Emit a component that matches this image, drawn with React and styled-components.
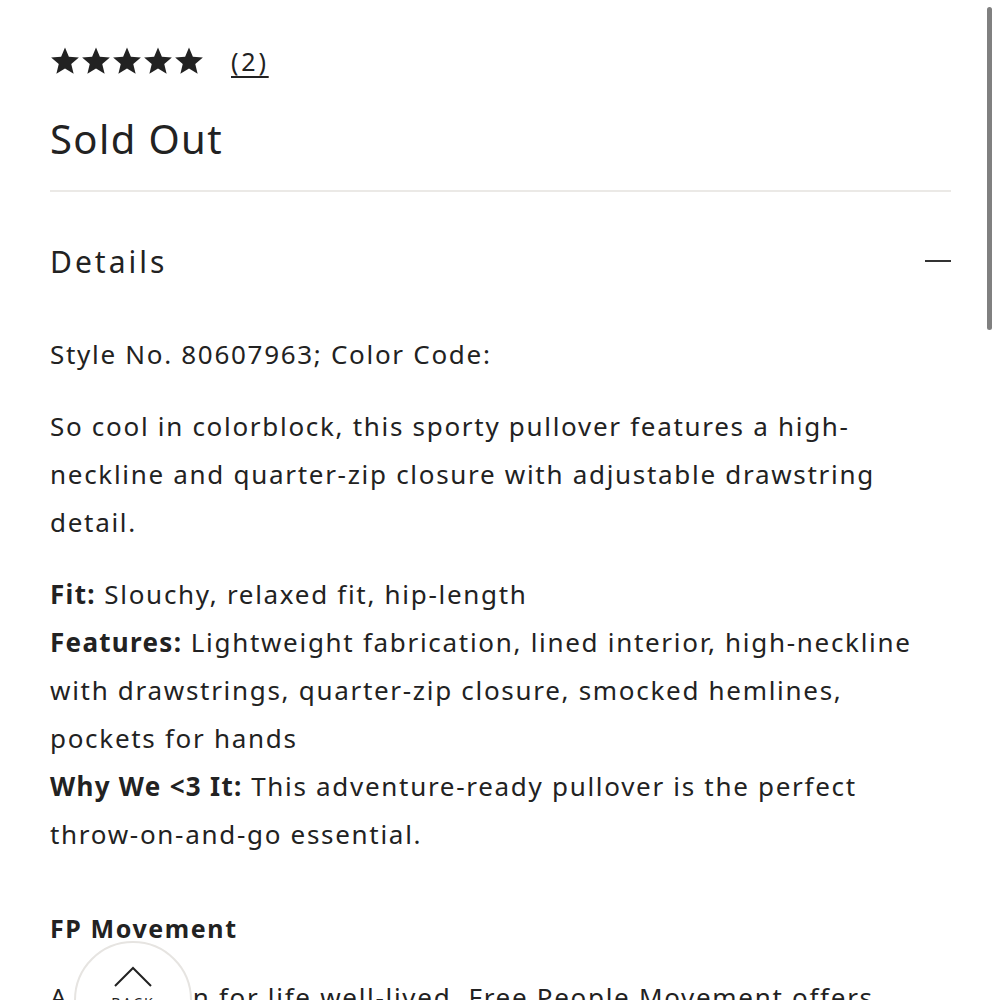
import React from "react";
import styled, { createGlobalStyle } from "styled-components";

const Global = createGlobalStyle`
  html, body { margin: 0; padding: 0; background: #fff; overflow: hidden; height: 1000px; }
  body { font-family: "Noto Sans", "Liberation Sans", sans-serif; color: #222; }
`;

const Page = styled.div`
  padding: 44px 49px 0 50px;
  width: 1000px;
  box-sizing: border-box;
`;

const RatingRow = styled.div`
  display: flex;
  align-items: center;
  gap: 27px;
  height: 34px;
`;

const Stars = styled.div`
  display: flex;
  gap: 1px;
`;

const Count = styled.a`
  font-size: 25px;
  color: #222;
  text-decoration: underline;
  text-underline-offset: 5px;
  letter-spacing: 2.8px;
`;

const Status = styled.h2`
  margin: 29px 0 0;
  font-weight: 400;
  font-size: 40px;
  letter-spacing: 1.4px;
  line-height: 64px;
  color: #222;
`;

const Divider = styled.hr`
  border: none;
  height: 2px;
  background: #ebe9e6;
  margin: 19px 0 0;
`;

const AccordionHeader = styled.div`
  display: flex;
  justify-content: space-between;
  align-items: center;
  height: 138px;
`;

const AccordionTitle = styled.h3`
  margin: 0;
  font-weight: 400;
  font-size: 30px;
  letter-spacing: 3px;
  color: #222;
`;

const Minus = styled.span`
  display: block;
  width: 26px;
  height: 2px;
  background: #333;
`;

const Body = styled.div`
  font-size: 26px;
  line-height: 48px;
  letter-spacing: 1.7px;
  color: #222;
`;

const Para = styled.p`
  margin: 0 0 24px;
`;

const Strong = styled.b`
  font-weight: 700;
  letter-spacing: 1.3px;
`;

const SubHeading = styled.h4`
  margin: 46px 0 21px;
  font-size: 25px;
  font-weight: 700;
  letter-spacing: 1.6px;
  line-height: 48px;
`;

const Scrollbar = styled.div`
  position: fixed;
  top: 7px;
  right: 8px;
  width: 5px;
  height: 323px;
  border-radius: 3px;
  background: #808080;
`;

const BackButton = styled.button`
  position: fixed;
  left: 74px;
  top: 941px;
  width: 118px;
  height: 118px;
  border-radius: 50%;
  border: 2px solid #e6e4e1;
  background: #fff;
  padding: 0;
  display: flex;
  flex-direction: column;
  align-items: center;
  padding-top: 23px;
  box-sizing: border-box;
  font-family: "Noto Sans", sans-serif;
`;

const BackLabel = styled.span`
  font-size: 14px;
  line-height: 18px;
  letter-spacing: 2px;
  color: #222;
  margin-top: 6px;
`;

const Star = () => (
  <svg width="30" height="30" viewBox="0 0 24 24">
    <path
      fill="#222"
      d="M12 1.2l3.1 7.4 8 .6-6.1 5.2 1.9 7.8L12 18l-6.9 4.2L7 14.4.9 9.2l8-.6z"
    />
  </svg>
);

export default function App() {
  return (
    <>
      <Global />
      <Page>
        <RatingRow>
          <Stars>
            {[0, 1, 2, 3, 4].map((i) => (
              <Star key={i} />
            ))}
          </Stars>
          <Count>(2)</Count>
        </RatingRow>
        <Status>Sold Out</Status>
        <Divider />
        <AccordionHeader>
          <AccordionTitle>Details</AccordionTitle>
          <Minus />
        </AccordionHeader>
        <Body>
          <Para>Style No. 80607963; Color Code:</Para>
          <Para>
            So cool in colorblock, this sporty pullover features a high-neckline
            and quarter-zip closure with adjustable drawstring detail.
          </Para>
          <Para>
            <Strong>Fit:</Strong> Slouchy, relaxed fit, hip-length
            <br />
            <Strong>Features:</Strong> Lightweight fabrication, lined interior,
            high-neckline with drawstrings, quarter-zip closure, smocked
            hemlines, pockets for hands
            <br />
            <Strong>Why We &lt;3 It:</Strong> This adventure-ready pullover is
            the perfect throw-on-and-go essential.
          </Para>
          <SubHeading>FP Movement</SubHeading>
          <Para>
            A collection for life well-lived. Free People Movement offers
            performance-ready activewear for every moment.
          </Para>
        </Body>
      </Page>
      <Scrollbar />
      <BackButton>
        <svg width="40" height="22" viewBox="0 0 40 22">
          <polyline points="2,20 20,2 38,20" fill="none" stroke="#222" strokeWidth="2" />
        </svg>
        <BackLabel>BACK</BackLabel>
      </BackButton>
    </>
  );
}
